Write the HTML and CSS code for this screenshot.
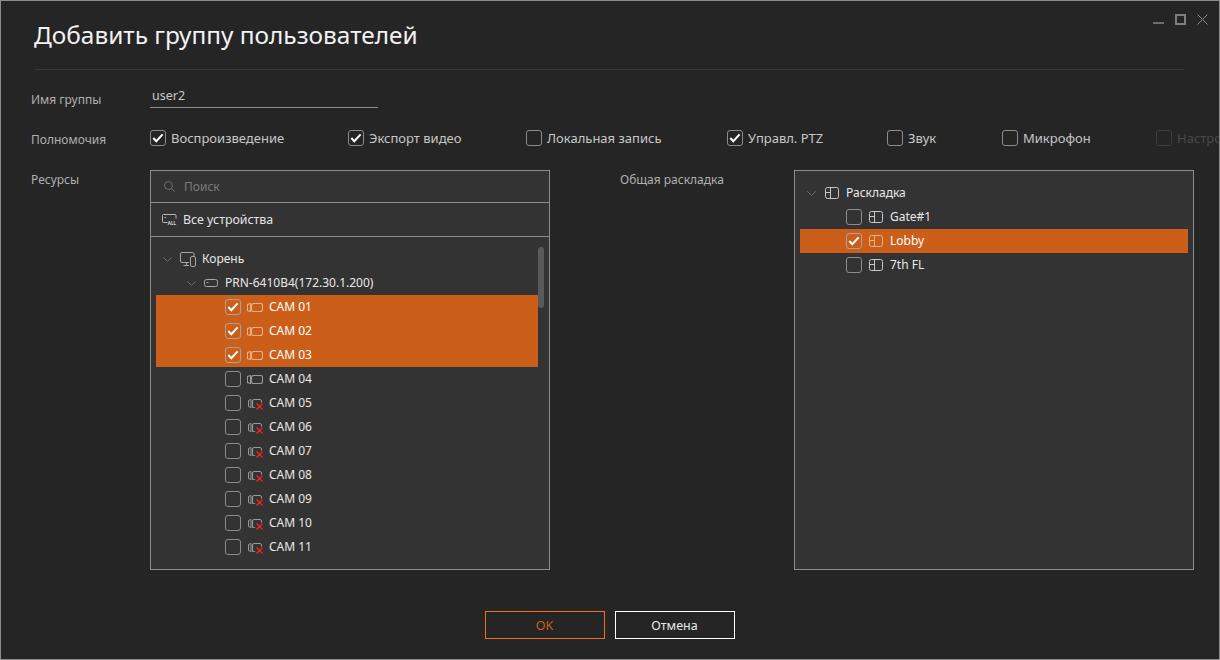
FILE: index.html
```html
<!DOCTYPE html>
<html lang="ru">
<head>
<meta charset="utf-8">
<title>Добавить группу пользователей</title>
<link rel="stylesheet" href="styles.css">
</head>
<body>
<svg class="defs" width="0" height="0" aria-hidden="true">
  <symbol id="i-check" viewBox="0 0 14 14"><path d="M2.300 7 5.300 10.200 11.600 3.400" fill="none" stroke="currentColor" stroke-width="2"/></symbol>
  <symbol id="i-chev" viewBox="0 0 9 5"><path d="M.4.400 4.500 4.400 8.600.400" fill="none" stroke="currentColor"/></symbol>
  <symbol id="i-cam" viewBox="0 0 16 9"><path d="M.5 1.500 3.500 .5V8.500L.5 7.500Z" fill="none" stroke="currentColor" stroke-width="1.100"/><rect x="4.500" y=".5" width="11" height="8" rx="2" fill="none" stroke="currentColor" stroke-width="1.100"/></symbol>
  <symbol id="i-camoff" viewBox="0 0 16 12"><path d="M1.500 2.500 4 1.500V9.500L1.500 8.500Z" fill="none" stroke="currentColor"/><path d="M5.500 9.500V3Q5.500 1.500 7 1.500H13Q14.500 1.500 14.500 3V4.500M5.500 9.500H8" fill="none" stroke="currentColor"/><path class="x-mark" d="M9.500 5.500 15.500 11.500M15.500 5.500 9.500 11.500"/></symbol>
  <symbol id="i-layout" viewBox="0 0 14 12"><rect x=".5" y=".5" width="13" height="11" rx="2" fill="none" stroke="currentColor"/><path d="M5.500 1V11M1 5.500H5.500" fill="none" stroke="currentColor"/></symbol>
  <symbol id="i-dev" viewBox="0 0 14 8"><rect x=".5" y=".5" width="13" height="7" rx="2" fill="none" stroke="currentColor"/><path d="M2.500 3.500H4.500" stroke="currentColor"/></symbol>
  <symbol id="i-root" viewBox="0 0 16 15"><path d="M9 10.500H2Q.5 10.500.5 9V2Q.5.500 2 .500H12.500Q14 .500 14 2V4.500M3.500 13.500H9M6.500 10.500V13.500" fill="none" stroke="currentColor"/><rect x="10.500" y="4.500" width="5" height="10" rx="1.500" fill="#333" stroke="currentColor"/></symbol>
  <symbol id="i-search" viewBox="0 0 11 11"><circle cx="4.500" cy="4.500" r="4" fill="none" stroke="currentColor"/><path d="M7.500 7.500 10.700 10.700" stroke="currentColor"/></symbol>
  <symbol id="i-all" viewBox="0 0 16 11"><path d="M5.500 8.500H1.500Q.5 8.500.5 7.500V1.500Q.5.500 1.500.500H13Q14 .500 14 1.500V4.500" fill="none" stroke="currentColor"/><path d="M2.500 3.500H4" stroke="currentColor"/></symbol>
</svg>

<div class="window">
  <div class="winctl">
    <span class="ctl-min"></span>
    <span class="ctl-max"></span>
    <svg class="ctl-close" viewBox="0 0 11 11" width="11" height="11"><path d="M.5.500 10.500 10.500M10.500.500.5 10.500" fill="none" stroke="currentColor"/></svg>
  </div>

  <h1 class="title">Добавить группу пользователей</h1>
  <div class="rule"></div>

  <div class="form-row name-row">
    <div class="label">Имя группы</div>
    <div class="name-input">user2</div>
  </div>

  <div class="form-row perm-row">
    <div class="label">Полномочия</div>
    <div class="perms">
      <label class="perm"><span class="cb"><svg class="ck"><use href="#i-check"/></svg></span>Воспроизведение</label>
      <label class="perm"><span class="cb"><svg class="ck"><use href="#i-check"/></svg></span>Экспорт видео</label>
      <label class="perm"><span class="cb"></span>Локальная запись</label>
      <label class="perm"><span class="cb"><svg class="ck"><use href="#i-check"/></svg></span>Управл. PTZ</label>
      <label class="perm"><span class="cb"></span>Звук</label>
      <label class="perm"><span class="cb"></span>Микрофон</label>
      <label class="perm disabled"><span class="cb"></span>Настройка</label>
    </div>
  </div>

  <div class="res-row">
    <div class="label res-label">Ресурсы</div>
    <section class="panel left-panel">
      <div class="search"><svg class="ic-search"><use href="#i-search"/></svg><span>Поиск</span></div>
      <div class="alldev">
        <svg class="ic-all" viewBox="0 0 16 11"><use href="#i-all"/><text x="5.800" y="10.800" class="all-text">ALL</text></svg>
        <span>Все устройства</span>
      </div>
      <div class="tree left-tree">
        <div class="row lv0"><svg class="chev"><use href="#i-chev"/></svg><svg class="ic-root"><use href="#i-root"/></svg><span class="txt">Корень</span></div>
        <div class="row lv1"><svg class="chev"><use href="#i-chev"/></svg><svg class="ic-dev"><use href="#i-dev"/></svg><span class="txt">PRN-6410B4(172.30.1.200)</span></div>
        <div class="row lv2 sel"><span class="cb"><svg class="ck"><use href="#i-check"/></svg></span><svg class="ic-cam"><use href="#i-cam"/></svg><span class="txt">CAM 01</span></div>
        <div class="row lv2 sel"><span class="cb"><svg class="ck"><use href="#i-check"/></svg></span><svg class="ic-cam"><use href="#i-cam"/></svg><span class="txt">CAM 02</span></div>
        <div class="row lv2 sel"><span class="cb"><svg class="ck"><use href="#i-check"/></svg></span><svg class="ic-cam"><use href="#i-cam"/></svg><span class="txt">CAM 03</span></div>
        <div class="row lv2"><span class="cb"></span><svg class="ic-cam"><use href="#i-cam"/></svg><span class="txt">CAM 04</span></div>
        <div class="row lv2"><span class="cb"></span><svg class="ic-camoff"><use href="#i-camoff"/></svg><span class="txt">CAM 05</span></div>
        <div class="row lv2"><span class="cb"></span><svg class="ic-camoff"><use href="#i-camoff"/></svg><span class="txt">CAM 06</span></div>
        <div class="row lv2"><span class="cb"></span><svg class="ic-camoff"><use href="#i-camoff"/></svg><span class="txt">CAM 07</span></div>
        <div class="row lv2"><span class="cb"></span><svg class="ic-camoff"><use href="#i-camoff"/></svg><span class="txt">CAM 08</span></div>
        <div class="row lv2"><span class="cb"></span><svg class="ic-camoff"><use href="#i-camoff"/></svg><span class="txt">CAM 09</span></div>
        <div class="row lv2"><span class="cb"></span><svg class="ic-camoff"><use href="#i-camoff"/></svg><span class="txt">CAM 10</span></div>
        <div class="row lv2"><span class="cb"></span><svg class="ic-camoff"><use href="#i-camoff"/></svg><span class="txt">CAM 11</span></div>
        <div class="scrollbar"></div>
      </div>
    </section>
    <div class="label layout-label">Общая раскладка</div>
    <section class="panel right-panel">
      <div class="tree right-tree">
        <div class="row rlv0"><svg class="chev"><use href="#i-chev"/></svg><svg class="ic-layout"><use href="#i-layout"/></svg><span class="txt">Раскладка</span></div>
        <div class="row rlv1"><span class="cb"></span><svg class="ic-layout"><use href="#i-layout"/></svg><span class="txt">Gate#1</span></div>
        <div class="row rlv1 sel"><span class="cb"><svg class="ck"><use href="#i-check"/></svg></span><svg class="ic-layout"><use href="#i-layout"/></svg><span class="txt">Lobby</span></div>
        <div class="row rlv1"><span class="cb"></span><svg class="ic-layout"><use href="#i-layout"/></svg><span class="txt">7th FL</span></div>
      </div>
    </section>
  </div>

  <div class="actions">
    <button class="btn btn-ok" type="button">OK</button>
    <button class="btn btn-cancel" type="button">Отмена</button>
  </div>
</div>
</body>
</html>
```

FILE: styles.css
```css
* { box-sizing: border-box; }
html, body { margin: 0; padding: 0; background: #252525; }
body { font-family: "Noto Sans", "Open Sans", sans-serif; font-size: 12px; overflow: hidden; }
.defs { position: absolute; }

.window {
  position: relative;
  width: 1220px;
  height: 660px;
  background: #252525;
  border: 1px solid #8c8c8c;
  overflow: hidden;
}

.winctl {
  position: absolute;
  top: 13px;
  right: 11px;
  display: flex;
  align-items: flex-start;
  gap: 11px;
  color: #8a8a8a;
}
.ctl-min { width: 11px; height: 2px; background: #6e6e6e; margin-top: 8px; }
.ctl-max { width: 11px; height: 11px; border: 2px solid #7e7e7e; }
.ctl-close { display: block; }

.title {
  margin: 0;
  padding: 17px 0 0 33px;
  height: 68px;
  font-size: 24.400px;
  line-height: 33px;
  font-weight: 400;
  color: #f2f2f2;
}
.rule { height: 1px; margin: 0 35px 0 34px; background: #393939; }

.label { width: 149px; padding-left: 30px; color: #b0b0b0; flex: none; }

.form-row { display: flex; }
.name-row { margin-top: 17px; height: 26px; align-items: center; }
.name-row .label { margin-top: -2px; }
.name-input {
  width: 228px;
  height: 20px;
  margin-top: -5px;
  padding-left: 2px;
  line-height: 15px;
  font-size: 12.500px;
  color: #c8c8c8;
  border-bottom: 1px solid #8c8c8c;
}
.perm-row { margin-top: 11px; height: 28px; align-items: center; }
.perm-row .label { padding-top: 2px; }
.perms {
  display: grid;
  grid-template-columns: 198px 178px 201px 160px 115px 154px 100px;
  flex: none;
}
.perm { display: flex; align-items: center; gap: 5px; font-size: 13px; color: #c8c8c8; white-space: nowrap; }
.perm.disabled { color: #4a4a4a; }
.perm.disabled .cb { border-color: #3e3e3e; }

.cb {
  width: 16px;
  height: 16px;
  flex: none;
  border: 1px solid #8c8c8c;
  border-radius: 3px;
  display: block;
}
.ck { display: block; width: 14px; height: 14px; color: #fff; }

.res-row { display: flex; align-items: flex-start; margin-top: 18px; }
.res-label { line-height: 20px; }
.panel { height: 400px; background: #333; border: 1px solid #8c8c8c; flex: none; }
.left-panel { width: 400px; display: flex; flex-direction: column; }
.layout-label { width: 244px; padding: 0 0 0 70px; line-height: 20px; white-space: nowrap; }
.right-panel { width: 400px; padding: 10px 5px 0; }

.search {
  height: 32px;
  display: flex;
  align-items: center;
  padding-left: 13px;
  color: #7c7c7c;
  border-bottom: 1px solid #8c8c8c;
  flex: none;
}
.ic-search { width: 11px; height: 11px; margin-right: 9px; color: #6e6e6e; }
.alldev {
  height: 34px;
  display: flex;
  align-items: center;
  padding-left: 11px;
  gap: 5px;
  font-size: 12.400px;
  color: #e4e4e4;
  border-bottom: 1px solid #8c8c8c;
  flex: none;
}
.ic-all { width: 16px; height: 11px; color: #b8b8b8; overflow: visible; }
.all-text { font-size: 4.500px; font-weight: 700; fill: #d8d8d8; font-family: "Noto Sans", sans-serif; }

.tree { position: relative; }
.left-tree { flex: 1; padding: 10px 11px 0 5px; }
.row { height: 24px; display: flex; align-items: center; color: #e8e8e8; white-space: nowrap; }
.txt { margin-bottom: 2px; }
.row.sel { background: #cb5f19; color: #fff; }
.row.sel svg:not(.ck) { color: #e8b08a; }
.row.sel .cb { border-color: #a9a29c; }
.x-mark { fill: none; stroke: #ff1e1e; stroke-width: 1.200px; }

.chev { width: 9px; height: 5px; color: #6e6e6e; flex: none; }
.ic-root { width: 16px; height: 15px; color: #a6a6a6; margin: 0 6px 0 8px; flex: none; }
.ic-dev { width: 14px; height: 8px; color: #a6a6a6; margin: 0 7px 0 8px; flex: none; }
.ic-cam { width: 16px; height: 9px; color: #999; margin: 0 6px; flex: none; }
.ic-camoff { width: 16px; height: 12px; color: #999; margin: 2px 6px 0; flex: none; }
.ic-layout { width: 14px; height: 12px; color: #c8c8c8; margin: 0 7px; flex: none; }

.lv0 { padding-left: 7px; }
.lv1 { padding-left: 31px; }
.lv2 { padding-left: 69px; }
.rlv0 { padding-left: 7px; }
.rlv0 .ic-layout { margin-left: 9px; }
.rlv1 { padding-left: 46px; }

.scrollbar {
  position: absolute;
  top: 10px;
  right: 5px;
  width: 6px;
  height: 61px;
  border-radius: 3px;
  background: #5a5a5a;
}

.actions { display: flex; justify-content: center; gap: 10px; margin-top: 41px; padding-right: 1px; }
.btn {
  width: 120px;
  height: 28px;
  background: transparent;
  font: inherit;
  font-size: 12.500px;
  padding: 0;
}
.btn-ok { border: 1px solid #f26f1f; color: #cb5f19; }
.btn-cancel { border: 1px solid #fff; color: #e8e8e8; }
```
